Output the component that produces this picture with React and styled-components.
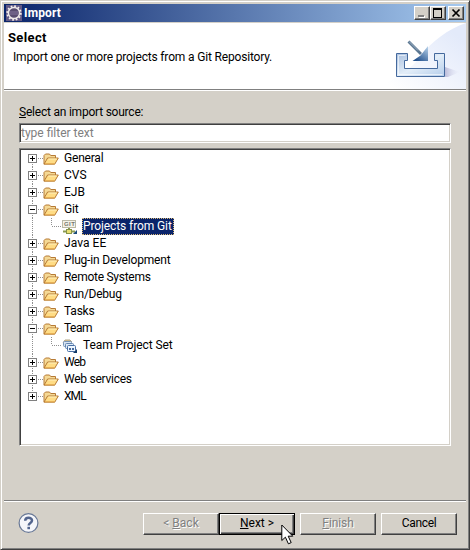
import React from 'react';
import styled, { createGlobalStyle, css } from 'styled-components';

const face = '#d4d0c8';
const shadow = '#808080';
const dark = '#404040';

const GlobalStyle = createGlobalStyle`
  * { box-sizing: border-box; }
  body { margin: 0; background: ${face}; }
`;

const Dialog = styled.div`
  position: relative;
  display: flex;
  flex-direction: column;
  width: 470px;
  height: 550px;
  padding: 3px 2px 2px 3px;
  background: ${face};
  border: 1px solid;
  border-color: ${face} ${dark} ${dark} ${face};
  box-shadow: inset 1px 1px 0 #fff, inset -1px -1px 0 ${shadow};
  font: 12px/17px Roboto, "Liberation Sans", sans-serif;
  color: #000;
`;

const TitleBar = styled.header`
  display: flex;
  align-items: center;
  flex: none;
  height: 18px;
  width: 462px;
  padding: 0 2px;
  background: linear-gradient(90deg, #0a246a, #a6caf0);
`;

const Title = styled.h1`
  flex: 1;
  margin: 0 0 0 2px;
  font-size: 12px;
  line-height: 18px;
  font-weight: 700;
  letter-spacing: 0.15px;
  color: #fff;
`;

const raised = css`
  background: ${face};
  border: 1px solid;
  border-color: #fff ${dark} ${dark} #fff;
  box-shadow: inset -1px -1px 0 ${shadow};
`;

const CaptionButton = styled.button`
  ${raised}
  display: flex;
  width: 16px;
  height: 14px;
  padding: 0;
  margin-left: ${p => (p.$gap ? 2 : 0)}px;
`;

const Banner = styled.section`
  display: flex;
  flex: none;
  justify-content: space-between;
  width: 462px;
  height: 69px;
  background: #fff;
  border-top: 1px solid ${face};
  border-bottom: 1px solid #fff;
  box-shadow: inset 0 -1px 0 ${shadow};
`;

const BannerText = styled.div`
  padding: 6px 0 0 4px;
`;

const Heading = styled.h2`
  margin: 0;
  font-size: 13px;
  line-height: 17px;
  font-weight: 700;
  letter-spacing: 0.35px;
`;

const Description = styled.p`
  margin: 3px 0 0 5px;
  letter-spacing: -0.17px;
`;

const Body = styled.main`
  display: flex;
  flex-direction: column;
  flex: 1;
  padding: 13px 14px 0 15px;
`;

const Label = styled.label`
  margin-bottom: 2px;
  letter-spacing: -0.22px;
`;

const sunken = css`
  background: #fff;
  border: 1px solid;
  border-color: ${shadow} #fff #fff ${shadow};
  box-shadow: inset 1px 1px 0 ${dark}, inset -1px -1px 0 ${face};
`;

const Filter = styled.input`
  ${sunken}
  width: 432px;
  height: 20px;
  margin: 0;
  padding: 0 1px;
  outline: none;
  border-radius: 0;
  font: inherit;
  &::placeholder { color: #808080; opacity: 1; }
`;

const Tree = styled.ul`
  ${sunken}
  width: 432px;
  height: 298px;
  margin: 5px 0 0;
  padding: 1px 2px 2px 8px;
  list-style: none;
`;

const Row = styled.li`
  display: flex;
  align-items: center;
  height: 17px;
`;

const ItemText = styled.span`
  height: 17px;
  margin-left: 4px;
  padding: 0 1px;
  letter-spacing: ${p => p.$track}px;
  white-space: pre;
  ${p => p.$selected && css`
    width: 92px;
    color: #fff;
    background: #0a246a;
    outline: 1px dotted #d8b878;
    outline-offset: -1px;
  `}
`;

const Footer = styled.footer`
  display: flex;
  align-items: flex-start;
  flex: none;
  height: 47px;
  width: 462px;
  padding: 12px 9px 0 14px;
  border-top: 1px solid ${shadow};
  box-shadow: inset 0 1px 0 #fff;
`;

const HelpIcon = styled.svg`
  margin: -1px auto 0 0;
`;

const Button = styled.button`
  ${raised}
  width: 76px;
  height: 22px;
  margin-left: ${p => p.$gap || 0}px;
  padding: 0 0 1px;
  font: inherit;
  line-height: 17px;
  letter-spacing: ${p => p.$track || 0}px;
  color: #000;
  &:disabled { color: #808080; text-shadow: 1px 1px 0 #fff; }
  ${p => p.$primary && css`
    border-color: #000;
    box-shadow: inset 1px 1px 0 #fff, inset -1px -1px 0 ${dark}, inset -2px -2px 0 ${shadow};
  `}
`;

const Cursor = styled.svg`
  position: absolute;
  left: 280px;
  top: 523px;
  pointer-events: none;
`;

const EclipseIcon = () => (
  <svg width="16" height="16" viewBox="0 0 16 16">
    <rect width="16" height="16" fill="#625985" />
    <circle cx="8" cy="8" r="6.7" fill="none" stroke="#f4eee8" strokeWidth="2" strokeDasharray="1.7 1.81" />
    <circle cx="8" cy="8" r="5.6" fill="#594d70" stroke="#eee9ea" strokeWidth="1.5" />
    <path d="M4 7h8M4 9h8" stroke="#85769d" />
  </svg>
);

const BannerArt = () => (
  <svg width="92" height="66" viewBox="374 23 92 66">
    <defs>
      <linearGradient id="sky" x1="0.2" y1="1" x2="1" y2="0.3">
        <stop offset="0" stopColor="#fff" /><stop offset="1" stopColor="#e3eafa" />
      </linearGradient>
      <linearGradient id="tray" x1="0" y1="0" x2="1" y2="1">
        <stop offset="0" stopColor="#a9c0df" /><stop offset=".5" stopColor="#e2edf8" /><stop offset="1" stopColor="#b4cdeb" />
      </linearGradient>
      <linearGradient id="head" x1="1" y1="0" x2=".3" y2="1">
        <stop offset="0" stopColor="#bdd7ee" /><stop offset="1" stopColor="#23518d" />
      </linearGradient>
      <linearGradient id="shade">
        <stop offset="0" stopColor="#bbbcd9" /><stop offset="1" stopColor="#e3e6f7" stopOpacity="0" />
      </linearGradient>
    </defs>
    <path d="M466 23C448 29 431 42 422 55C411 69 398 78 374 89H466Z" fill="url(#sky)" />
    <path d="M445 67l15 5-12 5h-3z" fill="url(#shade)" />
    <path d="M396.5 53.5h11v7h-3v8h33v-8h-3v-7h10v23h-48z" fill="url(#tray)" stroke="#44699d" />
    <path d="M398.5 55.5h7M398.5 55.5v19h44" fill="none" stroke="#fff" strokeOpacity=".6" />
    <path d="M408.5 41.5L421 54" stroke="#5a7691" strokeWidth="2.8" />
    <path d="M409 41.5l9 9" stroke="#a0b3c5" />
    <path d="M428 46v15h-15.5l8-5.5z" fill="url(#head)" />
  </svg>
);

const lineColor = '#909090';

const Branch = ({ open, first, last }) => (
  <svg width="15" height="17" viewBox="0 0 15 17" shapeRendering="crispEdges">
    {!first && <path d="M4.5 0V4" stroke={lineColor} strokeDasharray="1 1" />}
    {!last && <path d="M4.5 14V17" stroke={lineColor} strokeDasharray="1 1" />}
    <path d="M10 8.5h5" stroke={lineColor} strokeDasharray="1 1" />
    <rect x=".5" y="4.5" width="8" height="8" fill="#fff" stroke="#808080" />
    <path d={open ? 'M2 8.5h5' : 'M2 8.5h5M4.5 6v5'} stroke="#000" />
  </svg>
);

const ChildBranch = () => (
  <svg width="34" height="17" viewBox="0 0 34 17" shapeRendering="crispEdges">
    <path d="M4.5 0V17M23.5 0V8M24 8.5h10" fill="none" stroke={lineColor} strokeDasharray="1 1" />
  </svg>
);

const Folder = () => (
  <svg width="16" height="16" viewBox="0 0 16 16">
    <path d="M1 13V4.5L2.5 3h4l1.2 1.5h4.8V7" fill="#f5d995" stroke="#b67a35" />
    <path d="M1 13.2L4.6 7H15.3l-3.6 6.2z" fill="#ffdc85" stroke="#b67a35" strokeLinejoin="round" />
    <path d="M5.3 8h8.5" stroke="#fff0bd" />
    <path d="M2 12.7h9.5" stroke="#e7ad50" />
  </svg>
);

const GitText = styled.text`
  font: 700 6px "Liberation Sans", sans-serif;
  letter-spacing: 0.4px;
  fill: #77786f;
`;

const GitIcon = () => (
  <svg width="16" height="16" viewBox="0 0 16 16">
    <rect x=".5" y="1.5" width="13" height="7" fill="#f4f3e8" stroke="#bbb9a5" />
    <GitText x="2" y="7.3">GIT</GitText>
    <path d="M7 9v3M1 12.5h12" stroke="#8c9b52" strokeWidth="2" />
    <rect x="4.5" y="10.5" width="5" height="4" fill="#e8df73" stroke="#869447" />
    <path d="M15 11v4h-4z" fill="#194b7c" />
  </svg>
);

const TeamIcon = () => (
  <svg width="16" height="16" viewBox="0 0 16 16">
    <path d="M1 5l2-3h5l2 2" fill="#dfc690" stroke="#b3a687" />
    <rect x="1.5" y="3.5" width="8" height="5" rx="1" fill="#d7e4f4" stroke="#7896ba" />
    <rect x="3.5" y="5.5" width="8" height="5" rx="1" fill="#dceaf8" stroke="#6687b0" />
    <rect x="5.5" y="7.5" width="8" height="6" rx="1" fill="#edf6ff" stroke="#496fa4" />
    <path d="M7 10h2v2H7zM10 10h2v2h-2z" fill="#496b9c" />
    <path d="M15 11v4h-4z" fill="#123a68" />
  </svg>
);

const items = [
  { text: 'General', track: -0.2 },
  { text: 'CVS', track: 0 },
  { text: 'EJB', track: 0 },
  { text: 'Git', track: -0.2, open: true },
  { text: 'Projects from Git', track: -0.1, child: true, selected: true, icon: GitIcon },
  { text: 'Java EE', track: 0.05 },
  { text: 'Plug-in Development', track: -0.18 },
  { text: 'Remote Systems', track: -0.27 },
  { text: 'Run/Debug', track: -0.25 },
  { text: 'Tasks', track: -0.2 },
  { text: 'Team', track: -0.5, open: true },
  { text: 'Team Project Set', track: -0.1, child: true, icon: TeamIcon },
  { text: 'Web', track: -0.8 },
  { text: 'Web services', track: -0.26 },
  { text: 'XML', track: -0.9 },
];

const TreeItem = ({ item, first, last }) => {
  const Icon = item.icon || Folder;
  return (
    <Row>
      {item.child ? <ChildBranch /> : <Branch open={item.open} first={first} last={last} />}
      <Icon />
      <ItemText $track={item.track} $selected={item.selected}>{item.text}</ItemText>
    </Row>
  );
};

export default function App() {
  return (
    <>
      <GlobalStyle />
      <Dialog>
        <TitleBar>
          <EclipseIcon />
          <Title>Import</Title>
          <CaptionButton aria-label="Minimize">
            <svg width="14" height="12" shapeRendering="crispEdges"><path d="M4 10h6" stroke="#fff" strokeWidth="2" /><path d="M3 9h6" stroke="#808080" strokeWidth="2" /></svg>
          </CaptionButton>
          <CaptionButton aria-label="Maximize">
            <svg width="14" height="12" shapeRendering="crispEdges"><path d="M2.5 1v9h8V1M2 2h9" fill="none" stroke="#000" /><path d="M2 2h9" stroke="#000" strokeWidth="2" /></svg>
          </CaptionButton>
          <CaptionButton $gap aria-label="Close">
            <svg width="14" height="12"><path d="M3.5 2.5l7 7M10.5 2.5l-7 7" stroke="#000" strokeWidth="1.7" /></svg>
          </CaptionButton>
        </TitleBar>
        <Banner>
          <BannerText>
            <Heading>Select</Heading>
            <Description>Import one or more projects from a Git Repository.</Description>
          </BannerText>
          <BannerArt />
        </Banner>
        <Body>
          <Label htmlFor="filter"><u>S</u>elect an import source:</Label>
          <Filter id="filter" placeholder="type filter text" />
          <Tree>
            {items.map((item, i) => (
              <TreeItem key={item.text} item={item} first={i === 0} last={i === items.length - 1} />
            ))}
          </Tree>
        </Body>
        <Footer>
          <HelpIcon width="22" height="22" viewBox="0 0 22 22">
            <circle cx="10.5" cy="11" r="9.4" fill="#f5f6fa" stroke="#687896" strokeWidth="1.2" />
            <path d="M7.2 8.8C7.2 4.8 14 4.8 14 8.5c0 2.6-3.3 2.4-3.3 5" fill="none" stroke="#53658e" strokeWidth="2.5" />
            <rect x="9.4" y="14.8" width="2.6" height="2.4" fill="#53658e" />
          </HelpIcon>
          <Button disabled>&lt; <u>B</u>ack</Button>
          <Button $primary><u>N</u>ext &gt;</Button>
          <Button disabled $gap={5} $track={-0.1}><u>F</u>inish</Button>
          <Button $gap={5} $track={-0.35}>Cancel</Button>
        </Footer>
        <Cursor width="13" height="21" viewBox="0 0 13 21">
          <path d="M.8 1v15.5l3.6-3.3 3 6.6 2.8-1.2-3-6.4h4.6z" fill="#fff" stroke="#000" />
        </Cursor>
      </Dialog>
    </>
  );
}
